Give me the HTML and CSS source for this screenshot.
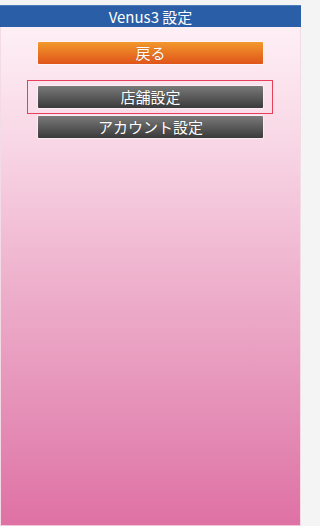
FILE: index.html
```html
<!DOCTYPE html>
<html lang="ja">
<head>
<meta charset="utf-8">
<title>Venus3 設定</title>
<link rel="stylesheet" href="styles.css">
</head>
<body>
<div class="page">
  <div class="header">Venus3 設定</div>
  <div class="content">
    <div class="btn-row"><a class="btn btn-orange">戻る</a></div>
    <div class="selected">
      <a class="btn btn-gray">店舗設定</a>
    </div>
    <div class="btn-row"><a class="btn btn-gray">アカウント設定</a></div>
  </div>
</div>
</body>
</html>
```
FILE: styles.css
```css
html, body {
  margin: 0;
  padding: 0;
  height: 100%;
}
body {
  background: #f4f4f4;
  font-family: "Noto Sans CJK JP", "Noto Sans", "Liberation Sans", sans-serif;
  padding-top: 5px;
  box-sizing: border-box;
}
.page {
  width: 301px;
  height: 521px;
  box-sizing: border-box;
  border-left: 1px solid #f3dbe6;
  border-right: 1px solid #f3dbe6;
  border-bottom: 1px solid #f3c6da;
  background: linear-gradient(to bottom, #fff4f8 0px, #f8d6e5 140px, #eeb0cc 280px, #e48cb5 420px, #df72a5 516px);
  display: flex;
  flex-direction: column;
}
.header {
  height: 22px;
  line-height: 21px;
  background: #2a5ea6;
  color: #fff;
  text-align: center;
  font-size: 15px;
  border-top: 1px solid #4d7cbc;
  box-sizing: border-box;
  margin: 0 -1px;
}
.content {
  display: flex;
  flex-direction: column;
  padding-top: 15px;
  padding-left: 37px;
}
.btn {
  display: block;
  width: 225px;
  height: 22px;
  line-height: 22px;
  text-align: center;
  color: #fff;
  font-size: 15px;
  border-radius: 1px;
  box-shadow: 0 0 1px 1px rgba(255,255,255,0.5);
  text-shadow: 0 0 1px rgba(0,0,0,0.3);
}
.btn-orange {
  background: linear-gradient(to bottom, #f2992c, #e0541a);
}
.btn-gray {
  background: linear-gradient(to bottom, #7a7a7a, #3a3a3a);
}
.btn-row {
  display: flex;
}
.selected {
  margin-top: 16px;
  margin-left: -11px;
  width: 246px;
  height: 34px;
  box-sizing: border-box;
  border: 1px solid #e8405a;
  display: flex;
  padding-top: 5px;
  padding-left: 10px;
}
.selected + .btn-row {
  margin-top: 2px;
}
```
